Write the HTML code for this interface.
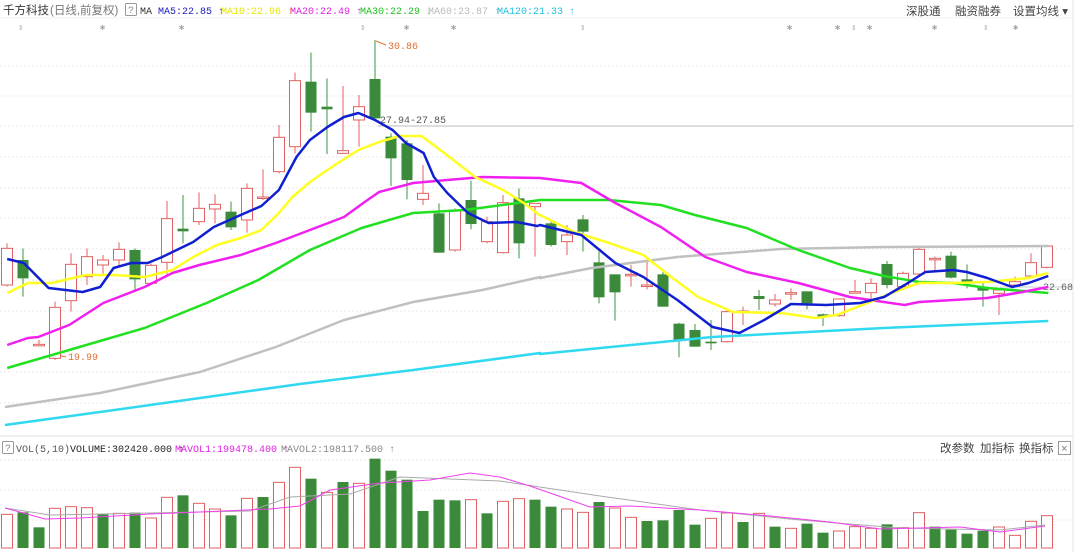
<!DOCTYPE html>
<html><head><meta charset="utf-8">
<style>
html,body{margin:0;padding:0;background:#fff;width:1080px;height:552px;overflow:hidden;font-family:"Liberation Sans","Noto Sans CJK SC",sans-serif;}
svg{position:absolute;left:0;top:0}
</style></head><body>
<svg id="s" width="1080" height="552" xmlns="http://www.w3.org/2000/svg" font-family="Liberation Mono, Noto Sans CJK SC, monospace">
<rect x="0" y="0" width="1080" height="552" fill="#fff"/>
<line x1="1073" y1="0" x2="1073" y2="552" stroke="#e4e4e4"/>
<line x1="0" y1="436" x2="1073" y2="436" stroke="#e0e0e0"/>
<line x1="0" y1="18" x2="1073" y2="18" stroke="#f0f0f0"/>
<g id="grid"></g>
<text x="3" y="14" font-size="11.5" fill="#333" font-family="Liberation Sans, Noto Sans CJK SC, sans-serif">千方科技</text>
<text x="50" y="14" font-size="11.5" fill="#777" font-family="Liberation Sans, Noto Sans CJK SC, sans-serif">(日线,前复权)</text>
<rect x="125.5" y="3.5" width="11" height="12" fill="none" stroke="#999" rx="1"/>
<text x="128" y="13" font-size="10" fill="#888">?</text>
<text x="140" y="14" font-size="10" fill="#333">MA</text>
<text x="158" y="14" font-size="10" fill="#2020c0">MA5:22.85 ↑</text>
<text x="221" y="14" font-size="10" fill="#e6e600">MA10:22.96 ↑</text>
<text x="290" y="14" font-size="10" fill="#e020e0">MA20:22.49 ↑</text>
<text x="360" y="14" font-size="10" fill="#20c020">MA30:22.29 ↓</text>
<text x="428" y="14" font-size="10" fill="#bbb">MA60:23.87 ↑</text>
<text x="497" y="14" font-size="10" fill="#20c0e0">MA120:21.33 ↑</text>
<text x="906" y="15" font-size="11.5" fill="#444" font-family="Liberation Sans, Noto Sans CJK SC, sans-serif">深股通</text>
<text x="955" y="15" font-size="11.5" fill="#444" font-family="Liberation Sans, Noto Sans CJK SC, sans-serif">融资融券</text>
<text x="1013" y="15" font-size="11.5" fill="#444" font-family="Liberation Sans, Noto Sans CJK SC, sans-serif">设置均线 ▾</text>
<g font-size="9" fill="#aaa">
<text x="18" y="30">⇕</text><text x="100" y="30">✱</text><text x="179" y="30">✱</text><text x="360" y="30">⇕</text><text x="404" y="30">✱</text><text x="451" y="30">✱</text><text x="580" y="30">⇕</text><text x="787" y="30">✱</text><text x="835" y="30">✱</text><text x="851" y="30">⇕</text><text x="867" y="30">✱</text><text x="932" y="30">✱</text><text x="983" y="30">⇕</text><text x="1013" y="30">✱</text>
</g>
<rect x="2.5" y="441.5" width="11" height="12" fill="none" stroke="#999" rx="1"/>
<text x="5" y="451" font-size="10" fill="#888">?</text>
<text x="16" y="452" font-size="10" fill="#555">VOL(5,10)</text>
<text x="70" y="452" font-size="10" fill="#222">VOLUME:302420.000 ↑</text>
<text x="175" y="452" font-size="10" fill="#e020e0">MAVOL1:199478.400 ↑</text>
<text x="281" y="452" font-size="10" fill="#888">MAVOL2:198117.500 ↑</text>
<text x="940" y="452" font-size="11.5" fill="#444" font-family="Liberation Sans, Noto Sans CJK SC, sans-serif">改参数</text>
<text x="980" y="452" font-size="11.5" fill="#444" font-family="Liberation Sans, Noto Sans CJK SC, sans-serif">加指标</text>
<text x="1019" y="452" font-size="11.5" fill="#444" font-family="Liberation Sans, Noto Sans CJK SC, sans-serif">换指标</text>
<rect x="1058.5" y="441.5" width="12" height="13" fill="none" stroke="#999"/>
<text x="1061" y="452" font-size="11" fill="#777">×</text>
<line x1="378" y1="126" x2="1073" y2="126" stroke="#bbb"/>
<text x="380" y="123" font-size="10" fill="#555">27.94-27.85</text>
<line x1="1000" y1="287" x2="1073" y2="287" stroke="#ccc"/>
<text x="1043" y="290" font-size="10" fill="#666">22.68</text>
<line x1="376" y1="41" x2="386" y2="45" stroke="#e07030"/>
<text x="388" y="49" font-size="10" fill="#e07030">30.86</text>
<line x1="57" y1="355" x2="66" y2="357" stroke="#e07030"/>
<text x="68" y="360" font-size="10" fill="#e07030">19.99</text>
<g id="c"></g>
</svg>
<script>
var NS="http://www.w3.org/2000/svg",g=document.getElementById('c'),gr=document.getElementById('grid');
function el(t,a,p){var e=document.createElementNS(NS,t);for(var k in a)e.setAttribute(k,a[k]);(p||g).appendChild(e);return e;}
[66,96,126,157,188,218,249,280,311,342,372,403].forEach(function(y){el('line',{x1:0,x2:1073,y1:y,y2:y,stroke:'#e8e8e8','stroke-dasharray':'2,2'},gr)});
[460,490,520].forEach(function(y){el('line',{x1:0,x2:1073,y1:y,y2:y,stroke:'#e8e8e8','stroke-dasharray':'2,2'},gr)});
var S=2.904,SY=3;
function X(i){return 7+i*16.0;}
var C=[['r',655,765,640,770],['g',690,745,655,800],['r',943,947,930,948],['r',832,985,815,990],['r',703,812,670,845],['r',680,740,655,765],['r',690,705,675,735],['r',658,690,637,710],['g',660,748,655,785],['r',706,760,700,765],['r',566,697,513,735],['g',596,604,495,640],['r',535,575,487,585],['r',523,537,493,580],['g',545,592,515,600],['r',475,570,460,608],['r',501,505,418,510],['r',322,425,285,430],['r',152,350,128,370],['g',155,248,68,305],['g',230,238,145,372],['r',362,370,168,372],['r',230,270,195,350],['g',147,265,30,275],['g',320,385,310,468],['g',340,450,330,508],['r',490,508,405,525],['g',550,668,520,668],['r',540,660,535,665],['g',510,582,452,598],['r',575,635,560,640],['r',518,668,495,670],['g',505,640,475,685],['r',520,530,520,680]];
var C2=[['g',220,285,215,290],['r',255,275,225,315],['g',208,245,195,305],['g',337,442,305,460],['g',373,427,373,512],['r',373,377,345,410],['r',405,409,335,418],['g',373,470,365,470],['g',521,570,518,622],['g',540,590,522,590],['g',575,580,510,600],['r',485,575,480,578],['r',483,487,470,525],['g',438,447,420,480],['r',450,462,432,470],['r',428,432,415,450],['g',424,460,424,478],['g',493,500,490,528],['r',447,497,447,500],['r',425,429,390,430],['r',400,428,385,450],['g',342,405,333,415],['r',370,410,365,420],['r',298,372,292,375],['r',325,329,320,360],['g',317,383,305,385],['g',388,400,343,415],['g',410,422,395,470],['r',420,430,420,495],['r',395,405,380,410],['r',338,378,310,380],['r',288,352,285,355]];
var all=[];C.forEach(function(c){all.push([c[0],30+c[1]/SY,30+c[2]/SY,30+c[3]/SY,30+c[4]/SY])});
C2.forEach(function(c){all.push([c[0],150+c[1]/SY,150+c[2]/SY,150+c[3]/SY,150+c[4]/SY])});
var VZ=[253,247,292,235,230,233,253,250,248,264,202,196,220,237,256,205,201,157,112,146,187,156,160,86,122,149,243,209,211,209,250,214,206,209,230,237,247,216,234,262,273,271,240,284,265,249,276,250,290,295,281,308,303,290,295,283,293,248,290,299,311,302,291,316,274,257];
var VC="rggrrrgrgrrgrrgrgrrgrgrggggggrgrrgr".slice(0,34)+"grrgrrggggrrgrgrggrrrgrrggggrrrr";
function t3(p){return p.map(function(q){return [q[0]*3/S,q[1]]})}
function t4(p){return p.map(function(q){return [540+(q[0]-540)*3/S,q[1]]})}
function line(pts,col,w){var d='M'+pts.map(function(p){return p[0].toFixed(1)+','+p[1].toFixed(1)}).join(' L');el('path',{d:d,fill:'none',stroke:col,'stroke-width':w,'stroke-linejoin':'round'});}
var cyan=[[5,425],[100,412],[200,398],[300,384]].concat(t3([[400,370],[523,353]])).concat(t4([[540,354],[707,337],[873,328],[1032,321]]));
var grey=[[5,407],[100,393],[200,372]].concat(t3([[267,347],[333,320],[400,302],[467,290],[523,277]])).concat(t4([[540,278],[590,268],[673,257],[773,249],[873,247],[1032,246]]));
var green=t3([[7,368],[67,350],[140,328],[200,303],[250,280],[300,250],[350,228],[400,213],[450,210],[523,200]]).concat(t4([[540,200],[607,200],[657,205],[690,215],[740,228],[790,250],[840,268],[873,276],[907,282],[940,283],[973,288],[1032,293]]));
var mag=t3([[7,345],[27,338],[37,337],[67,325],[100,303],[140,287],[167,273],[193,265],[233,255],[267,243],[300,230],[333,217],[353,202],[367,192],[400,183],[433,180],[467,177],[523,178]]).concat(t4([[540,178],[580,183],[613,203],[657,227],[700,257],[740,272],[790,283],[840,297],[873,302],[893,305],[907,302],[940,300],[973,298],[1007,292],[1032,287]]));
var yel=t3([[7,293],[27,283],[50,283],[83,275],[110,275],[140,277],[167,270],[187,257],[210,245],[233,238],[253,230],[270,213],[283,197],[300,182],[327,163],[347,150],[367,142],[387,136],[408,136],[430,153],[460,177],[487,190],[507,203],[522,215]]).concat(t4([[540,215],[573,232],[607,243],[640,255],[667,277],[693,297],[727,312],[773,313],[807,318],[827,315],[857,303],[883,292],[907,283],[940,283],[973,282],[1013,278],[1032,273]]));
var blue=t3([[7,259],[23,263],[47,288],[80,292],[97,287],[110,268],[127,263],[143,263],[157,257],[187,242],[207,227],[233,215],[253,206],[270,190],[287,157],[300,140],[317,127],[333,117],[347,113],[363,120],[380,130],[393,143],[410,153],[420,177],[433,193],[453,213],[473,223],[500,222],[520,226]]).concat(t4([[540,225],[580,235],[613,263],[640,277],[673,300],[707,327],[733,333],[757,320],[783,304],[817,305],[850,303],[873,297],[893,285],[913,272],[940,270],[953,272],[973,278],[997,287],[1013,283],[1032,276]]));
all.forEach(function(c,i){var x=X(i),red=c[0]=='r';
 el('line',{x1:x,x2:x,y1:c[3],y2:c[4],stroke:red?'#e06060':'#3a9a3a','stroke-width':1});
 var h=Math.max(c[2]-c[1],1.5);
 if(red)el('rect',{x:x-5.5,y:c[1],width:11,height:h,fill:'#fff',stroke:'#e06060','stroke-width':1});
 else el('rect',{x:x-5.5,y:c[1],width:11,height:h,fill:'#3a8a3a'});
});
line(cyan,'#30d8f0',2.5);line(grey,'#c0c0c0',2.5);line(green,'#20e020',2.5);line(mag,'#f020f0',2.5);line(yel,'#ffff20',2.5);line(blue,'#1020d0',2.5);
VZ.forEach(function(z,i){var x=X(i),top=430+z/SY,bot=548,red=VC[i]=='r';
 if(red)el('rect',{x:x-5.5,y:top,width:11,height:bot-top,fill:'#fff',stroke:'#e06060'});
 else el('rect',{x:x-5.5,y:top,width:11,height:bot-top,fill:'#3a8a3a'});});
line([[5,508],[50,515],[150,513],[250,511],[290,497],[350,494],[400,477],[500,481],[600,496],[700,510],[800,520],[900,528],[1000,530],[1045,525]],'#aaa',1);
line([[5,508],[45,519],[80,518],[150,514],[200,512],[270,509],[300,506],[330,490],[380,483],[430,480],[470,473],[500,477],[530,486],[590,507],[630,506],[700,510],[770,516],[830,522],[880,529],[960,527],[1000,532],[1045,526]],'#f040f0',1);
</script>
</body></html>
